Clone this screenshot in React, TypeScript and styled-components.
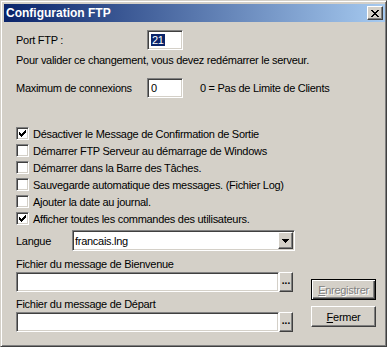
import styled, { createGlobalStyle } from "styled-components";

const face = "#D4D0C8";
const shadow = "#808080";
const dark = "#404040";

const GlobalStyle = createGlobalStyle`
  html, body {
    margin: 0;
    padding: 0;
    background: ${face};
  }
  body {
    font-family: "Liberation Sans", Arial, sans-serif;
    font-size: 11px;
    letter-spacing: -0.28px;
    color: #000;
  }
`;

const checks = [
  { label: "Désactiver le Message de Confirmation de Sortie", on: true },
  { label: "Démarrer FTP Serveur au démarrage de Windows", on: false },
  { label: "Démarrer dans la Barre des Tâches.", on: false },
  { label: "Sauvegarde automatique des messages. (Fichier Log)", on: false },
  { label: "Ajouter la date au journal.", on: false },
  { label: "Afficher toutes les commandes des utilisateurs.", on: true },
];

function App() {
  return (
    <>
      <GlobalStyle />
      <Window>
        <TitleBar>
          <Title>Configuration FTP</Title>
          <CloseButton>
            <svg width="8" height="7" viewBox="0 0 8 7">
              <path
                d="M0 0h2v1h-2zM6 0h2v1h-2zM1 1h2v1h-2zM5 1h2v1h-2zM2 2h4v1h-4zM3 3h2v1h-2zM2 4h4v1h-4zM1 5h2v1h-2zM5 5h2v1h-2zM0 6h2v1h-2zM6 6h2v1h-2z"
                fill="#000"
              />
            </svg>
          </CloseButton>
        </TitleBar>

        <Body>
          <FieldRow>
            <Label $width={131}>Port FTP :</Label>
            <Field $width={36}>
              <Selected>21</Selected>
            </Field>
          </FieldRow>
          <Note>Pour valider ce changement, vous devez redémarrer le serveur.</Note>

          <FieldRow $top={11}>
            <Label $width={131}>Maximum de connexions</Label>
            <Field $width={36}>0</Field>
            <Hint>0 = Pas de Limite de Clients</Hint>
          </FieldRow>

          <CheckList>
            {checks.map((c) => (
              <CheckRow key={c.label}>
                <CheckBox>
                  {c.on && (
                    <svg width="7" height="7" viewBox="0 0 7 7">
                      <path
                        d="M6 0h1v3h-1zM5 1h1v3h-1zM4 2h1v3h-1zM3 3h1v3h-1zM2 4h1v3h-1zM1 3h1v3h-1zM0 2h1v3h-1z"
                        fill="#000"
                      />
                    </svg>
                  )}
                </CheckBox>
                <span>{c.label}</span>
              </CheckRow>
            ))}
          </CheckList>

          <FieldRow $top={3}>
            <Label $width={56}>Langue</Label>
            <Combo>
              <ComboText>francais.lng</ComboText>
              <SmallButton $height={17}>
                <svg width="7" height="4" viewBox="0 0 7 4">
                  <path d="M0 0h7v1h-7zM1 1h5v1h-5zM2 2h3v1h-3zM3 3h1v1h-1z" fill="#000" />
                </svg>
              </SmallButton>
            </Combo>
          </FieldRow>

          <Bottom>
            <Files>
              <FileLabel>Fichier du message de Bienvenue</FileLabel>
              <FileRow>
                <Field $width={263} />
                <SmallButton $height={20}>...</SmallButton>
              </FileRow>
              <FileLabel $top={6}>Fichier du message de Départ</FileLabel>
              <FileRow>
                <Field $width={263} />
                <SmallButton $height={20}>...</SmallButton>
              </FileRow>
            </Files>
            <Actions>
              <PushButton $default $disabled>
                <u>E</u>nregistrer
              </PushButton>
              <PushButton>
                <u>F</u>ermer
              </PushButton>
            </Actions>
          </Bottom>
        </Body>
      </Window>
    </>
  );
}

const Window = styled.div`
  box-sizing: border-box;
  width: 387px;
  height: 347px;
  padding: 3px 1px 3px 3px;
  background: ${face};
  border: 1px solid;
  border-color: ${face} ${dark} ${dark} ${face};
  box-shadow: inset 1px 1px #fff, inset -1px -1px ${shadow};
  display: flex;
  flex-direction: column;
`;

const TitleBar = styled.div`
  height: 18px;
  display: flex;
  align-items: center;
  justify-content: space-between;
  padding: 0 2px 0 2px;
  background: linear-gradient(to right, #0a246a, #a6caf0);
`;

const Title = styled.span`
  color: #fff;
  font-weight: bold;
  font-size: 12px;
  letter-spacing: 0;
`;

const raised = `
  background: ${face};
  border: 1px solid;
  border-color: #fff ${dark} ${dark} #fff;
  box-shadow: inset -1px -1px ${shadow};
  box-sizing: border-box;
`;

const sunken = `
  background: #fff;
  border: 1px solid;
  border-color: ${shadow} #fff #fff ${shadow};
  box-shadow: inset 1px 1px ${dark}, inset -1px -1px ${face};
  box-sizing: border-box;
`;

const CloseButton = styled.div`
  ${raised}
  width: 16px;
  height: 14px;
  display: flex;
  align-items: center;
  justify-content: center;
`;

const Body = styled.div`
  display: flex;
  flex-direction: column;
  padding: 8px 0 0 12px;
`;

const FieldRow = styled.div<{ $top?: number }>`
  display: flex;
  align-items: center;
  margin-top: ${(p) => p.$top ?? 0}px;
`;

const Label = styled.span<{ $width: number }>`
  width: ${(p) => p.$width}px;
  flex: none;
`;

const Field = styled.div<{ $width: number }>`
  ${sunken}
  width: ${(p) => p.$width}px;
  height: 20px;
  padding: 2px 3px;
  line-height: 14px;
`;

const Selected = styled.span`
  background: #0a246a;
  color: #fff;
  padding: 0 1px;
`;

const Note = styled.div`
  margin-top: 4px;
  line-height: 13px;
`;

const Hint = styled.span`
  margin-left: 17px;
`;

const CheckList = styled.div`
  margin-top: 27px;
  display: flex;
  flex-direction: column;
`;

const CheckRow = styled.div`
  height: 17px;
  display: flex;
  align-items: center;
  gap: 4px;
`;

const CheckBox = styled.div`
  ${sunken}
  width: 13px;
  height: 13px;
  display: flex;
  align-items: center;
  justify-content: center;
`;

const Combo = styled.div`
  ${sunken}
  width: 223px;
  height: 21px;
  display: flex;
  align-items: center;
  padding: 1px 1px 1px 2px;
`;

const ComboText = styled.span`
  flex: 1;
`;

const SmallButton = styled.div<{ $height: number }>`
  ${raised}
  width: ${(p) => (p.$height === 17 ? 15 : 14)}px;
  height: ${(p) => p.$height}px;
  display: flex;
  align-items: center;
  justify-content: center;
  font-weight: bold;
  font-size: 10px;
  letter-spacing: 0;
  line-height: 1;
  padding-bottom: ${(p) => (p.$height === 17 ? 0 : 3)}px;
`;

const Bottom = styled.div`
  display: flex;
`;

const Files = styled.div`
  display: flex;
  flex-direction: column;
  width: 277px;
`;

const FileLabel = styled.div<{ $top?: number }>`
  margin-top: ${(p) => p.$top ?? 7}px;
  margin-bottom: 1px;
  line-height: 13px;
`;

const FileRow = styled.div`
  display: flex;
`;

const Actions = styled.div`
  margin-left: 18px;
  padding-top: 28px;
  display: flex;
  flex-direction: column;
  gap: 6px;
`;

const PushButton = styled.div<{ $default?: boolean; $disabled?: boolean }>`
  box-sizing: border-box;
  width: 65px;
  height: 21px;
  display: flex;
  align-items: center;
  justify-content: center;
  background: ${face};
  border: 1px solid;
  border-color: ${(p) => (p.$default ? "#000" : `#fff ${dark} ${dark} #fff`)};
  box-shadow: ${(p) =>
    p.$default
      ? `inset 1px 1px #fff, inset -1px -1px ${dark}, inset -2px -2px ${shadow}`
      : `inset -1px -1px ${shadow}`};
  color: ${(p) => (p.$disabled ? shadow : "#000")};
  text-shadow: ${(p) => (p.$disabled ? "1px 1px #fff" : "none")};
`;

export default App;
